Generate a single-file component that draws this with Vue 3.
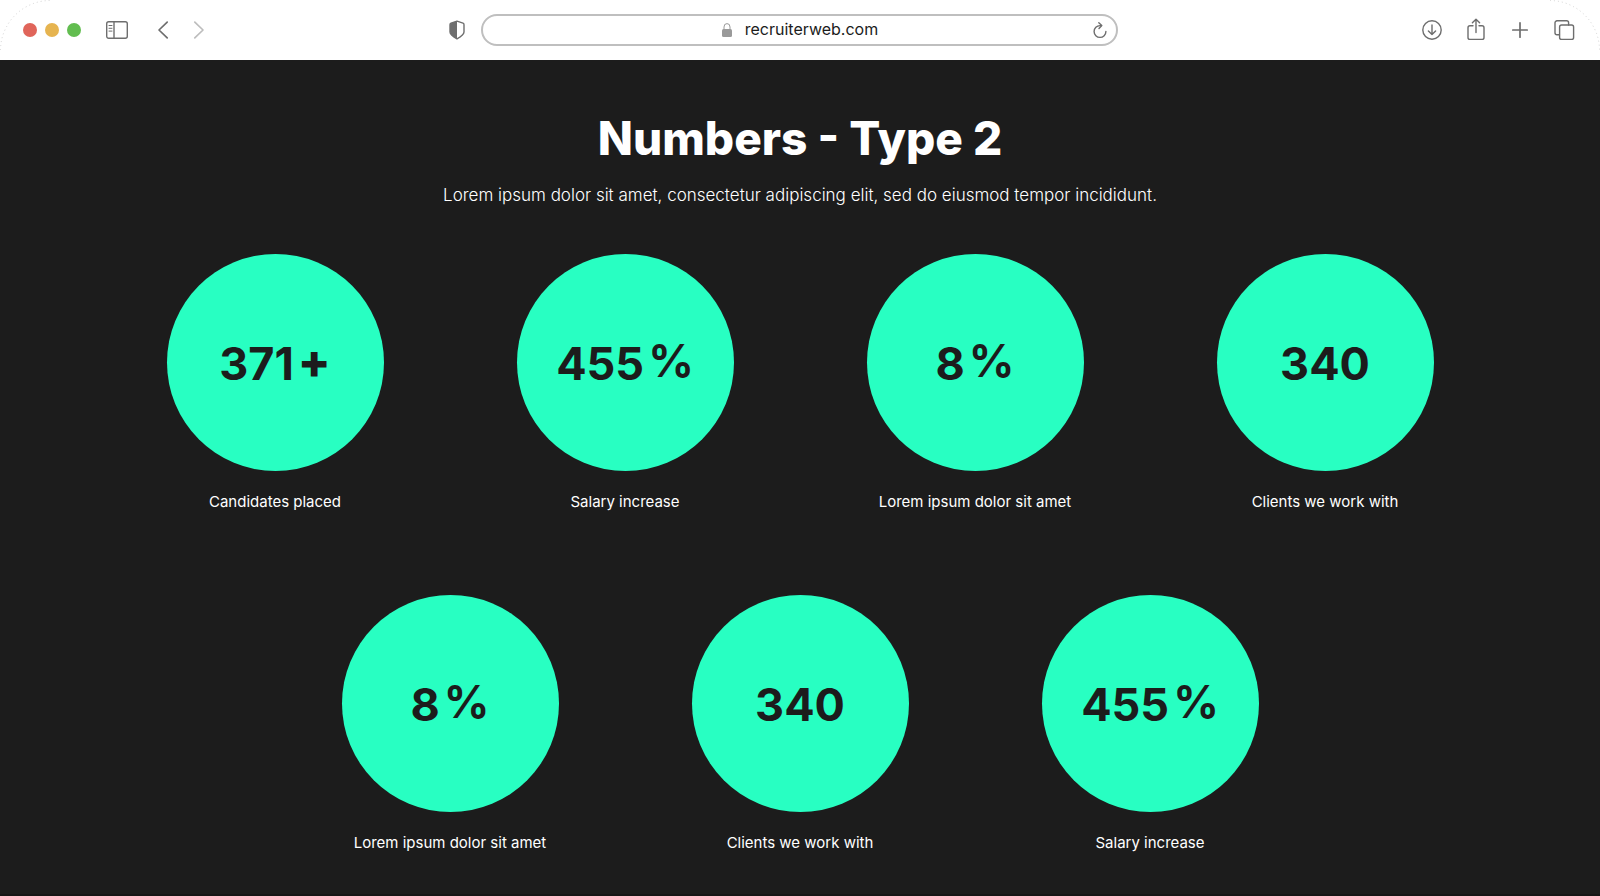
<template>
  <div class="browser">
    <header class="toolbar">
      <svg class="corner corner-left" viewBox="0 0 52 52" aria-hidden="true">
        <path d="M0.5 50 A50 50 0 0 1 50 0.5" />
      </svg>
      <svg class="corner corner-right" viewBox="0 0 52 52" aria-hidden="true">
        <path d="M2 0.5 A50 50 0 0 1 51.5 50" />
      </svg>

      <div class="toolbar-left">
        <div class="window-buttons">
          <button class="dot red" aria-label="Close"></button>
          <button class="dot yellow" aria-label="Minimize"></button>
          <button class="dot green" aria-label="Zoom"></button>
        </div>
        <button class="icon-btn" aria-label="Sidebar">
          <svg width="24" height="24" viewBox="0 0 24 24">
            <rect x="1.7" y="3.7" width="20.6" height="16.6" rx="2" />
            <path d="M9 4v16" />
            <path class="thin" d="M4 7.5h3M4 10.3h3M4 13.1h3" />
          </svg>
        </button>
        <div class="history">
          <button class="icon-btn" aria-label="Back">
            <svg width="12" height="24" viewBox="0 0 12 24">
              <path class="bold" d="M10.2 4.2 L2 12 L10.2 19.8" />
            </svg>
          </button>
          <button class="icon-btn light" aria-label="Forward">
            <svg width="12" height="24" viewBox="0 0 12 24">
              <path class="bold" d="M1.8 4.2 L10 12 L1.8 19.8" />
            </svg>
          </button>
        </div>
        <button class="icon-btn shield" aria-label="Privacy report">
          <svg width="16" height="20" viewBox="0 0 16 20">
            <path d="M8 1.2 L14 3.2 Q15 3.6 15 4.8 V12 Q15 15 8 18.8 Q1 15 1 12 V4.8 Q1 3.6 2 3.2 Z" />
            <path class="solid" d="M8 1 L2 3.2 Q1 3.6 1 4.8 V12 Q1 15 8 19 Z" />
          </svg>
        </button>
      </div>

      <div class="address">
        <label class="address-label">
          <svg class="lock" width="12" height="16" viewBox="0 0 12 16" aria-label="Secure">
            <path d="M3 8 V5 a3 3.4 0 0 1 6 0 V8" />
            <rect x="1" y="7" width="10" height="8" rx="1.5" />
          </svg>
          <input v-model="url" class="url" type="text" aria-label="Address" spellcheck="false" />
        </label>
        <button class="icon-btn reload" aria-label="Reload">
          <svg width="16" height="18" viewBox="0 0 16 18">
            <path d="M9.4 4.6 H8 A5.9 5.9 0 1 0 13.9 10.5" />
            <path d="M6.8 1.8 L9.8 4.6 L7 7.6" />
          </svg>
        </button>
      </div>

      <div class="toolbar-right">
        <button class="icon-btn" aria-label="Downloads">
          <svg width="24" height="24" viewBox="0 0 24 24">
            <circle cx="12" cy="12" r="9.2" />
            <path d="M12 7v9.5M8.4 13 L12 16.6 L15.6 13" />
          </svg>
        </button>
        <button class="icon-btn" aria-label="Share">
          <svg width="24" height="24" viewBox="0 0 24 24">
            <path d="M9 7.7H6 a2 2 0 0 0 -2 2 V19.4 a2 2 0 0 0 2 2 H18 a2 2 0 0 0 2 -2 V9.7 a2 2 0 0 0 -2 -2 H15" />
            <path d="M12 14.5V1.4M8.4 4.8 L12 1.2 L15.6 4.8" />
          </svg>
        </button>
        <button class="icon-btn" aria-label="New tab">
          <svg width="24" height="24" viewBox="0 0 24 24">
            <path class="bold" d="M4.8 12h14.4M12 4.8v14.4" />
          </svg>
        </button>
        <button class="icon-btn" aria-label="Tabs">
          <svg width="24" height="24" viewBox="0 0 24 24">
            <path d="M7.4 16.8H5 a2 2 0 0 1 -2 -2 V4.8 a2 2 0 0 1 2 -2 H14.6 a2 2 0 0 1 2 2 V7" />
            <rect x="7.6" y="7" width="14" height="14.4" rx="2" />
          </svg>
        </button>
      </div>
    </header>

    <main class="numbers">
      <h1>Numbers - Type 2</h1>
      <p class="intro">Lorem ipsum dolor sit amet, consectetur adipiscing elit, sed do eiusmod tempor incididunt.</p>

      <ul class="number-list">
        <li v-for="(item, index) in numbers" :key="index" class="number-item">
          <div class="circle">
            <span class="value">{{ item.value }}</span>
            <span v-if="item.suffix" class="suffix" :class="{ percent: item.suffix === '%' }">{{ item.suffix }}</span>
          </div>
          <p class="caption">{{ item.label }}</p>
        </li>
      </ul>
    </main>
  </div>
</template>

<script setup>
import { ref } from 'vue'

const url = ref('recruiterweb.com')

const numbers = ref([
  { value: '371', suffix: '+', label: 'Candidates placed' },
  { value: '455', suffix: '%', label: 'Salary increase' },
  { value: '8', suffix: '%', label: 'Lorem ipsum dolor sit amet' },
  { value: '340', suffix: '', label: 'Clients we work with' },
  { value: '8', suffix: '%', label: 'Lorem ipsum dolor sit amet' },
  { value: '340', suffix: '', label: 'Clients we work with' },
  { value: '455', suffix: '%', label: 'Salary increase' }
])
</script>

<style>
body {
  margin: 0;
  background: #1c1c1c;
}
</style>

<style scoped>
.browser {
  min-height: 100vh;
  box-sizing: border-box;
  display: flex;
  flex-direction: column;
  border-bottom: 3px solid #161616;
  background: #1c1c1c;
  font-family: Inter, 'Liberation Sans', sans-serif;
}

.toolbar {
  position: relative;
  display: grid;
  grid-template-columns: 1fr 41% 1fr;
  align-items: center;
  height: 60px;
  padding: 0 24px 0 23px;
  background: #ffffff;
}

.corner {
  position: absolute;
  top: 0;
  width: 52px;
  height: 52px;
  fill: none;
  stroke: #d4d4d4;
  stroke-dasharray: 1 3;
  pointer-events: none;
}

.corner-left {
  left: 0;
}

.corner-right {
  right: 0;
}

.toolbar-left,
.toolbar-right,
.window-buttons,
.history {
  display: flex;
  align-items: center;
}

.toolbar-left {
  gap: 24px;
}

.toolbar-right {
  justify-content: flex-end;
  gap: 20px;
}

.window-buttons {
  gap: 8px;
}

.history {
  gap: 24px;
  margin-left: 4px;
}

.dot {
  width: 14px;
  height: 14px;
  padding: 0;
  border: none;
  border-radius: 50%;
}

.dot.red {
  background: #e0655a;
}

.dot.yellow {
  background: #e6b450;
}

.dot.green {
  background: #62bd50;
}

.icon-btn {
  display: flex;
  padding: 0;
  border: none;
  background: none;
  color: #6e6e6e;
  cursor: pointer;
}

.icon-btn.light {
  color: #bdbdbd;
}

.icon-btn svg {
  fill: none;
  stroke: currentColor;
  stroke-width: 1.4;
  stroke-linecap: round;
  stroke-linejoin: round;
}

.icon-btn .thin {
  stroke-width: 1;
}

.icon-btn .bold {
  stroke-width: 1.7;
}

.icon-btn .solid {
  fill: currentColor;
  stroke: none;
}

.shield {
  margin-left: auto;
  margin-right: 16px;
}

.address {
  display: flex;
  align-items: center;
  height: 32px;
  box-sizing: border-box;
  padding: 0 8px 0 24px;
  border: 2px solid #bfbfbf;
  border-radius: 16px;
}

.address-label {
  flex: 1;
  display: flex;
  justify-content: center;
  align-items: center;
  gap: 12px;
}

.lock {
  fill: #9a9a9a;
}

.lock path {
  fill: none;
  stroke: #9a9a9a;
}

.url {
  field-sizing: content;
  padding: 0 0 2px;
  border: none;
  outline: none;
  background: none;
  color: #1c1c1c;
  font-family: inherit;
  font-size: 16px;
  line-height: 24px;
}

.numbers {
  flex: 1;
  padding: 48px 100px 40px;
  color: #ffffff;
  text-align: center;
}

h1 {
  margin: 0;
  font-size: 46px;
  line-height: 60px;
  font-weight: 800;
}

.intro {
  margin: 15px 0 0;
  font-size: 17px;
  line-height: 24px;
  font-weight: 300;
}

.number-list {
  display: flex;
  flex-wrap: wrap;
  justify-content: center;
  row-gap: 82px;
  margin: 47px 0 0;
  padding: 0;
  list-style: none;
}

.number-item {
  flex: 0 0 25%;
  display: flex;
  flex-direction: column;
  align-items: center;
}

.circle {
  display: flex;
  justify-content: center;
  align-items: center;
  width: 217px;
  height: 217px;
  border-radius: 50%;
  background: #28ffc2;
  color: #1c1c1c;
}

.value {
  padding-top: 2px;
  font-size: 45px;
  line-height: 56px;
  font-weight: 700;
}

.suffix {
  margin-left: 4px;
  padding-bottom: 4px;
  font-size: 48px;
  line-height: 56px;
  font-weight: 800;
}

.suffix.percent {
  font-size: 45px;
  font-weight: 700;
}

.caption {
  margin: 20px 0 0;
  font-size: 15px;
  line-height: 22px;
}
</style>
